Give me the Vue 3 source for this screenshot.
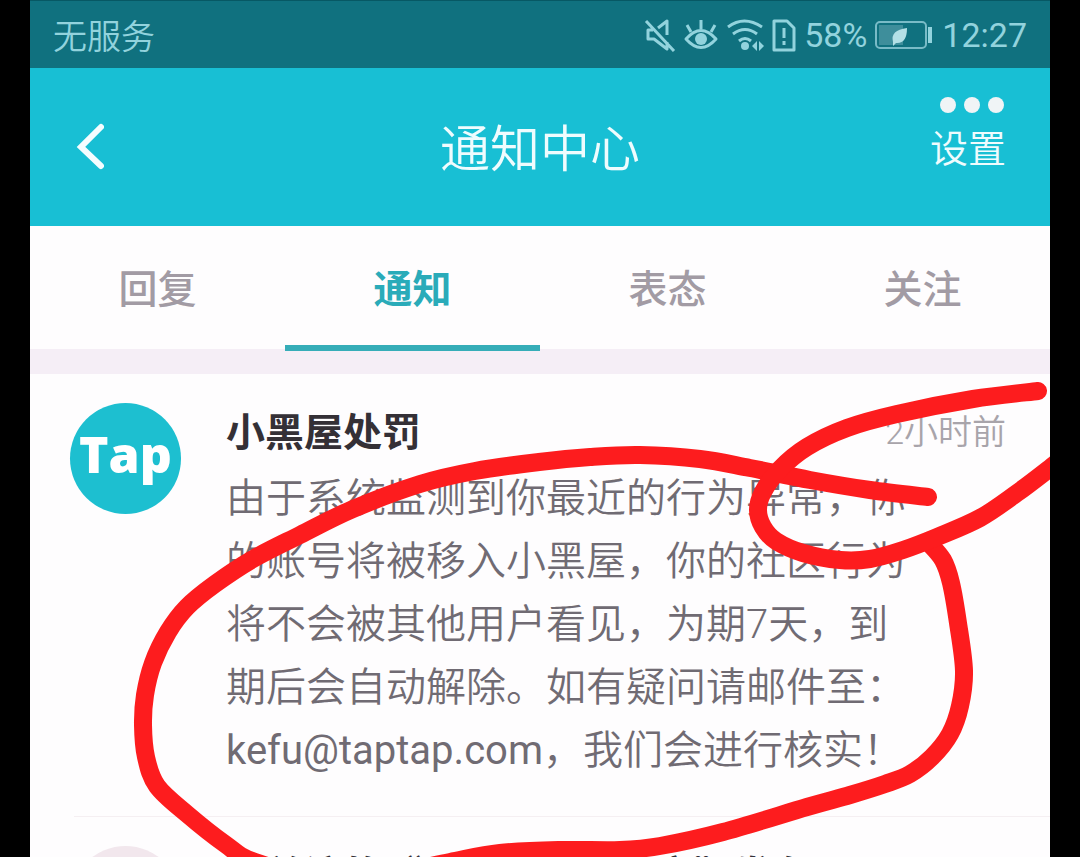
<script setup>
import { ref } from 'vue'

const tabs = ['回复', '通知', '表态', '关注']
const active = ref(1)

// Smooth curve through a list of hand-placed points.
function smooth(points) {
  let d = `M${points[0][0]} ${points[0][1]}`
  for (let i = 0; i < points.length - 1; i++) {
    const p0 = points[Math.max(i - 1, 0)]
    const p1 = points[i]
    const p2 = points[i + 1]
    const p3 = points[Math.min(i + 2, points.length - 1)]
    const c1 = [p1[0] + (p2[0] - p0[0]) / 6, p1[1] + (p2[1] - p0[1]) / 6]
    const c2 = [p2[0] - (p3[0] - p1[0]) / 6, p2[1] - (p3[1] - p1[1]) / 6]
    d += ` C${c1[0]} ${c1[1]} ${c2[0]} ${c2[1]} ${p2[0]} ${p2[1]}`
  }
  return d
}

const strokes = [
  smooth([
    [928, 497], [870, 490], [810, 480], [750, 468], [700, 459], [640, 455], [590, 457], [539, 462],
    [475, 471], [420, 484], [353, 509], [300, 535], [253, 559], [215, 584], [187, 607], [168, 632],
    [153, 663], [145, 695], [143, 725], [146, 757], [157, 786], [187, 814], [225, 844], [255, 862],
    [330, 880], [400, 872], [450, 862], [500, 853], [560, 850], [620, 850], [660, 846], [723, 832],
    [807, 807], [850, 795], [885, 784], [910, 774], [932, 757], [950, 734], [960, 706], [964, 671],
    [958, 623], [951, 583], [943, 560], [928, 542]
  ]),
  smooth([
    [1038, 391], [973, 399], [897, 414], [847, 428], [807, 447], [780, 469], [763, 492], [758, 510],
    [763, 527], [776, 541], [803, 553], [840, 560], [870, 559], [903, 550], [937, 537], [980, 518],
    [1017, 493], [1050, 468], [1070, 452]
  ])
]
</script>

<template>
  <div class="stage">
    <main class="phone">
      <header class="status">
        <span class="carrier">无服务</span>
        <div class="indicators">
          <svg class="glyph" width="32" height="34" viewBox="0 0 32 34" role="img" aria-label="静音">
            <path d="M2 3 30 33M14 10l9-7v14M9 12H4v9h6l13 10v-7" />
          </svg>
          <svg class="glyph" width="36" height="34" viewBox="0 0 36 34" role="img" aria-label="护眼">
            <path d="M3 21Q18 4 33 21 18 38 3 21zM18 2v9M4 7l4 7M32 7l-4 7" />
            <circle class="solid" cx="18" cy="21" r="6" />
          </svg>
          <svg class="glyph" width="38" height="34" viewBox="0 0 38 34" role="img" aria-label="无线网络">
            <path d="M2 9Q18-3 36 9M7 16q12-9 24 0M13 23q6-5 12 0" />
            <circle class="solid" cx="19" cy="28" r="4" />
            <path class="solid" d="m31 23-5 5 5 5zm2 0 5 5-5 5z" />
          </svg>
          <svg class="glyph" width="26" height="34" viewBox="0 0 26 34" role="img" aria-label="无 SIM 卡">
            <path d="M3 3h13l7 7v22H3zM13 10v10M13 23v4" />
          </svg>
          <span>58%</span>
          <svg class="battery" width="58" height="30" viewBox="0 0 58 30" role="img" aria-label="省电模式">
            <rect class="case" x="2" y="2" width="50" height="26" rx="4" />
            <rect class="charge" x="5" y="5" width="24" height="20" />
            <path class="leaf" d="M19 22Q16 10 33 8q0 16-11 15l-3 3z" />
            <path class="cap" d="M56 7v16" />
          </svg>
          <time class="clock">12:27</time>
        </div>
      </header>

      <nav class="bar">
        <button class="back" type="button" aria-label="返回">
          <svg width="30" height="50" viewBox="0 0 30 50"><path d="M27 7 7 27l20 19" /></svg>
        </button>
        <h1>通知中心</h1>
        <button class="settings" type="button">设置</button>
        <svg class="dots" width="66" height="18" viewBox="0 0 66 18" aria-hidden="true">
          <circle cx="9" cy="9" r="8" /><circle cx="33" cy="9" r="8" /><circle cx="57" cy="9" r="8" />
        </svg>
      </nav>

      <div class="tabs" role="tablist">
        <button
          v-for="(tab, i) in tabs"
          :key="tab"
          type="button"
          role="tab"
          class="tab"
          :class="{ on: i === active }"
          :aria-selected="i === active"
          @click="active = i"
        >{{ tab }}</button>
      </div>
      <div class="band"></div>

      <article class="item">
        <div class="avatar tap">Tap</div>
        <div class="content">
          <div class="head">
            <h2>小黑屋处罚</h2>
            <time>2小时前</time>
          </div>
          <p>由于系统监测到你最近的行为异常，你的账号将被移入小黑屋，你的社区行为将不会被其他用户看见，为期7天，到期后会自动解除。如有疑问请邮件至：<span class="latin">kefu@taptap.com</span>，我们会进行核实！</p>
        </div>
      </article>
      <hr />
      <article class="item">
        <div class="avatar pale"></div>
        <div class="content">
          <div class="head"><h2>你关注的“心动网络工作室”发布</h2></div>
        </div>
      </article>

      <svg class="ink" width="1020" height="857" viewBox="30 0 1020 857" aria-hidden="true">
        <path v-for="d in strokes" :key="d" :d="d" />
      </svg>
    </main>
  </div>
</template>

<style>
body {
  background: #000;
}
</style>

<style scoped>
.stage {
  height: 100vh;
  padding: 0 30px;
  background: #000;
  overflow: hidden;
  font-family: Roboto, "Noto Sans CJK SC", sans-serif;
}
.phone {
  position: relative;
  height: 100%;
  background: #fefdfe;
  overflow: hidden;
}
button {
  border: 0;
  padding: 0;
  background: none;
  font: inherit;
  color: inherit;
}
h1, h2, p {
  margin: 0;
}
.status {
  display: flex;
  align-items: center;
  justify-content: space-between;
  box-sizing: border-box;
  height: 68px;
  padding: 0 23px;
  border-top: 1px solid #075864;
  background: #10717f;
  color: #92d3dd;
  font-size: 34px;
  font-weight: 350;
}
.indicators {
  display: flex;
  align-items: center;
  gap: 7px;
  font-weight: 400;
}
.glyph {
  fill: none;
  stroke: #92d3dd;
  stroke-width: 3;
  stroke-linejoin: round;
}
.solid {
  fill: #92d3dd;
  stroke: none;
}
.battery {
  fill: none;
}
.case {
  stroke: #79bbc7;
  stroke-width: 2;
}
.charge {
  fill: #3e8e9b;
}
.leaf {
  fill: #b3e0e6;
}
.cap {
  stroke: #92d3dd;
  stroke-width: 4;
}
.clock {
  margin-left: 3px;
}
.bar {
  position: relative;
  display: grid;
  grid-template-columns: 1fr auto 1fr;
  align-items: center;
  box-sizing: border-box;
  height: 158px;
  padding: 0 44px 4px;
  background: #18bfd4;
  color: #effcfe;
}
.back {
  display: flex;
  justify-self: start;
}
.back path {
  fill: none;
  stroke: #f4fdff;
  stroke-width: 6;
  stroke-linecap: round;
}
h1 {
  font-size: 50px;
  font-weight: 350;
}
.settings {
  justify-self: end;
  font-size: 38px;
  font-weight: 350;
}
.dots {
  position: absolute;
  top: 28px;
  right: 45px;
  fill: #f0f4f6;
}
.tabs {
  display: grid;
  grid-template-columns: repeat(4, 1fr);
  height: 123px;
}
.tab {
  position: relative;
  padding-bottom: 4px;
  color: #a29ba4;
  font-size: 39px;
  font-weight: 500;
}
.tab.on {
  color: #2aabb9;
  font-weight: 700;
}
.tab.on::after {
  content: "";
  position: absolute;
  right: 0;
  bottom: -2px;
  left: 0;
  height: 6px;
  background: #36adb8;
}
.band {
  height: 25px;
  background: #f5eef6;
}
.item {
  display: flex;
  gap: 45px;
  padding: 29px 44px 34px 40px;
}
.avatar {
  flex: none;
  width: 111px;
  height: 111px;
  border-radius: 50%;
}
.tap {
  background: #1dbfd0;
  color: #fff;
  font: 800 50px/102px "Open Sans", sans-serif;
  text-align: center;
}
.pale {
  background: #f2e7ed;
}
.content {
  flex: 1;
  min-width: 0;
}
.head {
  display: flex;
  align-items: center;
  justify-content: space-between;
  height: 52px;
}
h2 {
  color: #343036;
  font-family: "Noto Sans CJK SC", sans-serif;
  font-size: 39px;
  font-weight: 700;
  line-height: 52px;
  white-space: nowrap;
}
.head time {
  color: #a8a4aa;
  font-size: 34px;
  font-weight: 350;
}
p {
  margin-top: 12px;
  padding-right: 80px;
  color: #706b73;
  font-size: 40px;
  font-weight: 350;
  line-height: 63px;
}
.latin {
  font-weight: 400;
}
hr {
  margin: 0 0 0 44px;
  border: 0;
  border-top: 1px solid #f5eff2;
}
.ink {
  position: absolute;
  top: 0;
  left: 0;
  fill: none;
  stroke: #fd1c1e;
  stroke-width: 18;
  stroke-linecap: round;
  pointer-events: none;
}
</style>
